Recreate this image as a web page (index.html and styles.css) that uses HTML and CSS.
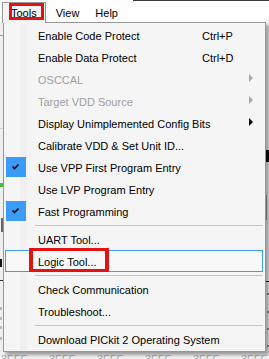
FILE: index.html
```html
<!DOCTYPE html>
<html>
<head>
<meta charset="utf-8">
<link rel="stylesheet" href="styles.css">
</head>
<body>
<div class="app">
  <div class="menubar">
    <div class="mb-item open">Tools<span class="annot annot-tools"></span></div>
    <div class="mb-item">View</div>
    <div class="mb-item">Help</div>
  </div>
  <div class="workspace">
    <div class="mem-row">
      <span>3FFF</span><span>3FFF</span><span>3FFF</span><span>3FFF</span><span>3FFF</span><span>3FFF</span>
    </div>
  </div>

  <div class="menu">
    <div class="item"><span class="icon"></span><span class="label">Enable Code Protect</span><span class="key">Ctrl+P</span><span></span></div>
    <div class="item"><span class="icon"></span><span class="label">Enable Data Protect</span><span class="key">Ctrl+D</span><span></span></div>
    <div class="item disabled"><span class="icon"></span><span class="label">OSCCAL</span><span class="key"></span><span class="arrow"></span></div>
    <div class="item disabled"><span class="icon"></span><span class="label">Target VDD Source</span><span class="key"></span><span class="arrow"></span></div>
    <div class="item"><span class="icon"></span><span class="label">Display Unimplemented Config Bits</span><span class="key"></span><span class="arrow"></span></div>
    <div class="item"><span class="icon"></span><span class="label">Calibrate VDD &amp; Set Unit ID...</span><span class="key"></span><span></span></div>
    <div class="item"><span class="icon check"><svg width="20" height="20" viewBox="0 0 20 20"><polyline points="6.5,9.5 8.5,11.5 12.5,7.5" fill="none" stroke="#000" stroke-width="1.6"/></svg></span><span class="label">Use VPP First Program Entry</span><span class="key"></span><span></span></div>
    <div class="item"><span class="icon"></span><span class="label">Use LVP Program Entry</span><span class="key"></span><span></span></div>
    <div class="item"><span class="icon check"><svg width="20" height="20" viewBox="0 0 20 20"><polyline points="6.5,9.5 8.5,11.5 12.5,7.5" fill="none" stroke="#000" stroke-width="1.6"/></svg></span><span class="label">Fast Programming</span><span class="key"></span><span></span></div>
    <div class="sep"><div class="sep-line"></div></div>
    <div class="item"><span class="icon"></span><span class="label">UART Tool...</span><span class="key"></span><span></span></div>
    <div class="item hover"><span class="icon"></span><span class="label">Logic Tool...</span><span class="key"></span><span></span><span class="annot annot-logic"></span></div>
    <div class="sep"><div class="sep-line"></div></div>
    <div class="item"><span class="icon"></span><span class="label">Check Communication</span><span class="key"></span><span></span></div>
    <div class="item"><span class="icon"></span><span class="label">Troubleshoot...</span><span class="key"></span><span></span></div>
    <div class="sep"><div class="sep-line"></div></div>
    <div class="item"><span class="icon"></span><span class="label">Download PICkit 2 Operating System</span><span class="key"></span><span></span></div>
  </div>
</div>
</body>
</html>
```
FILE: styles.css
```css
html, body {
  margin: 0;
  padding: 0;
}
body {
  width: 269px;
  height: 359px;
  overflow: hidden;
  background: #f0f0f0;
  font-family: "Liberation Sans", Arial, sans-serif;
  font-size: 11px;
  color: #000;
}
.app {
  position: relative;
  width: 269px;
  height: 359px;
  display: flex;
  flex-direction: column;
}

/* menu bar */
.menubar {
  height: 22px;
  flex: 0 0 22px;
  display: flex;
  align-items: flex-start;
  padding-left: 2px;
  box-sizing: border-box;
  background:
    linear-gradient(#3a3a3a, #3a3a3a) 133px 0 / 136px 1px no-repeat,
    #fff;
}
.mb-item {
  margin-top: 2px;
  padding: 1px 8px 0;
  line-height: 20px;
  white-space: nowrap;
}
.mb-item.open {
  position: relative;
  z-index: 3;
  padding: 0 8px;
  height: 21px;
  box-sizing: border-box;
  border: 1px solid #979797;
  border-bottom: 0;
  background: #f5f5f5;
  margin-right: 2px;
}

/* red annotation boxes */
.annot {
  position: absolute;
  box-sizing: border-box;
  border: 3px solid #e41212;
  pointer-events: none;
}
.annot-tools {
  left: 6px;
  top: 0;
  width: 35px;
  height: 17px;
}
.annot-logic {
  left: 24px;
  top: -2px;
  width: 80px;
  height: 24px;
  border-width: 3px 4px;
}

/* background app area */
.workspace {
  flex: 1;
  display: flex;
  flex-direction: column;
  justify-content: flex-end;
  background:
    linear-gradient(#9a9a9a, #9a9a9a) 0 13px / 3px 1px no-repeat,
    linear-gradient(#d8d8d8, #d8d8d8) 0 106px / 3px 1px no-repeat,
    linear-gradient(#40c040, #40c040) 0 161px / 3px 4px no-repeat,
    linear-gradient(#666, #666) 1px 196px / 2px 14px no-repeat,
    linear-gradient(#111, #111) 0 237px / 2px 8px no-repeat,
    linear-gradient(#333, #333) 0 258px / 3px 1px no-repeat,
    linear-gradient(#bbb, #bbb) 0 285px / 2px 3px no-repeat,
    linear-gradient(#bbb, #bbb) 0 295px / 2px 3px no-repeat,
    linear-gradient(#bbb, #bbb) 0 304px / 2px 3px no-repeat,
    linear-gradient(#bbb, #bbb) 0 315px / 2px 3px no-repeat,
    linear-gradient(#111, #111) 266px 128px / 3px 12px no-repeat,
    linear-gradient(#999, #999) 266px 173px / 1px 25px no-repeat,
    linear-gradient(#111, #111) 266px 259px / 3px 1px no-repeat,
    linear-gradient(#888, #888) 267px 271px / 2px 2px no-repeat,
    linear-gradient(#888, #888) 267px 289px / 2px 2px no-repeat,
    linear-gradient(#888, #888) 267px 306px / 2px 2px no-repeat,
    linear-gradient(#888, #888) 267px 323px / 2px 2px no-repeat,
    #f0f0f0;
}
.mem-row {
  height: 5px;
  overflow: hidden;
  display: grid;
  grid-template-columns: repeat(6, 48px);
  padding-left: 1px;
  line-height: 11px;
  color: #a8a8a8;
}

/* dropdown menu (overlay) */
.menu {
  position: absolute;
  z-index: 2;
  left: 3px;
  top: 22px;
  width: 263px;
  height: 330px;
  box-sizing: border-box;
  border: 1px solid #979797;
  background: #f5f5f5;
  padding: 1px 2px 1px 1px;
  box-shadow: 3px 3px 3px rgba(0, 0, 0, 0.35);
}
.menu::before {
  content: "";
  position: absolute;
  left: 16px;
  top: 1px;
  bottom: 1px;
  width: 7px;
  background: repeating-conic-gradient(#e9e9e9 0 25%, #f7f7f7 0 50%) 0 0 / 2px 2px;
}
.item {
  position: relative;
  height: 22px;
  box-sizing: border-box;
  padding-top: 2px;
  line-height: 20px;
  display: grid;
  grid-template-columns: 33px 164px 1fr 19px;
  white-space: nowrap;
}
.item.disabled {
  color: #a0a0a0;
}
.item.hover {
  background: #f8f8f8;
  box-shadow: inset 0 0 0 1px #3d9cf5;
}
.icon {
  display: block;
}
.icon.check {
  width: 20px;
  height: 20px;
  margin: -1px 0 0 1px;
  background: #3b9cf7;
  position: relative;
  z-index: 1;
}
.icon.check svg {
  display: block;
}
.label {
  overflow: visible;
}
.arrow {
  align-self: start;
  margin: 4px 0 0 5px;
  width: 0;
  height: 0;
  border-left: 4px solid #000;
  border-top: 4px solid transparent;
  border-bottom: 4px solid transparent;
}
.item.disabled .arrow {
  border-left-color: #a8a8a8;
}
.sep {
  height: 6px;
  box-sizing: border-box;
  padding: 3px 0 0 30px;
}
.sep-line {
  height: 1px;
  background: #c6c6c6;
}
```
